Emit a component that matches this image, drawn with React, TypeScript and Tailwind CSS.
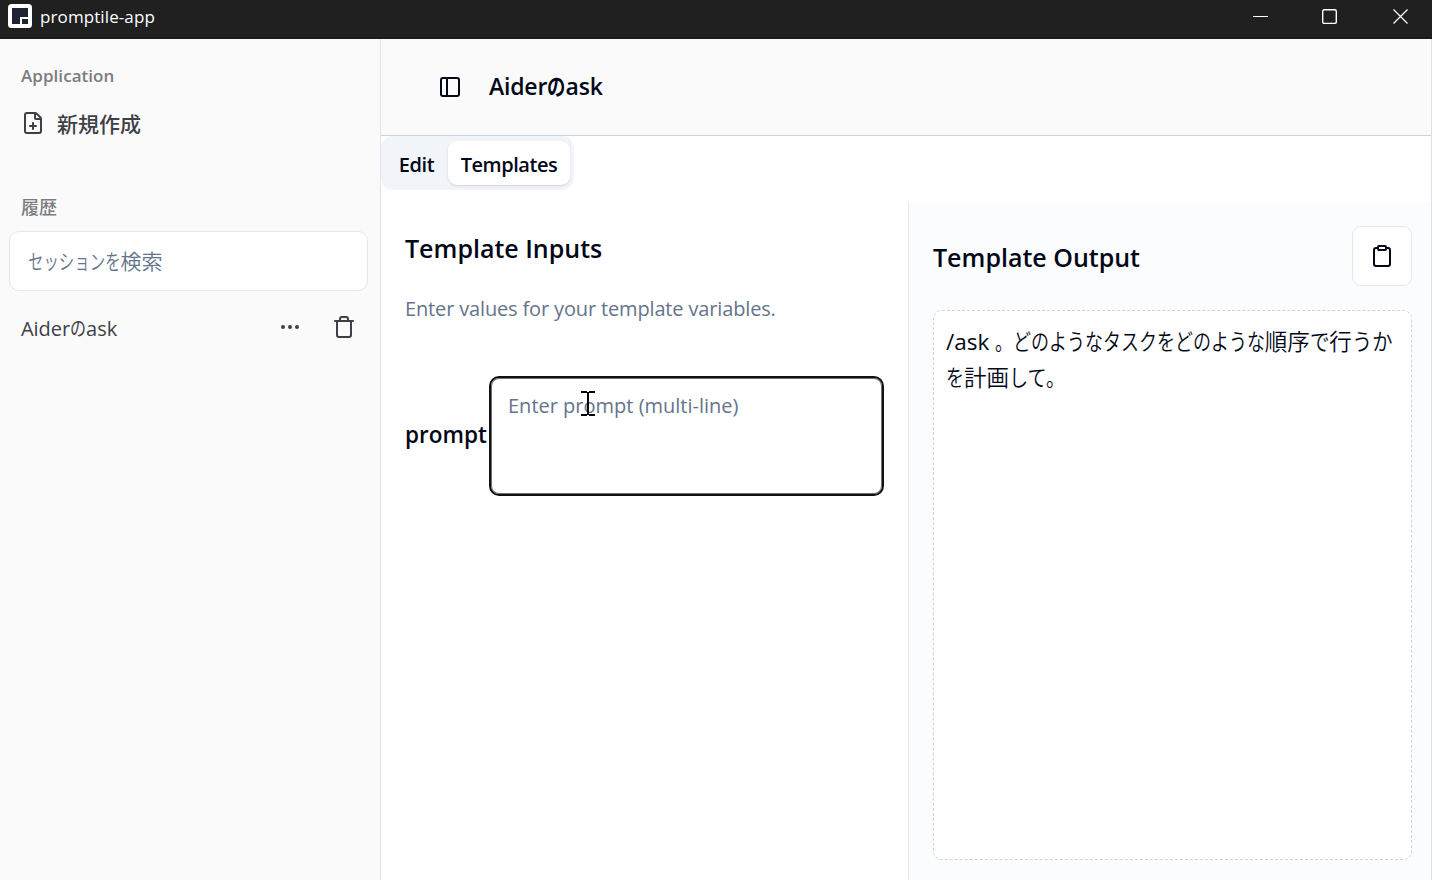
import React from "react";
import { FilePlus, PanelLeft, Ellipsis, Trash, Clipboard } from "lucide-react";

// Condensed kana, set to a given advance per character (in em).
function Kana({ children, ratio = 0.8 }: { children: string; ratio?: number }) {
  return (
    <span className="inline-block whitespace-nowrap" style={{ width: `${children.length * ratio}em` }}>
      <span className="inline-block origin-left" style={{ transform: `scaleX(${ratio})` }}>
        {children}
      </span>
    </span>
  );
}

function TitleBar() {
  return (
    <header className="flex h-[39px] shrink-0 items-start border-b-2 border-[#1b191a] bg-[#202020] text-white">
      <div className="flex items-start gap-2 pt-1 pl-2">
        <svg width="24" height="24" viewBox="0 0 24 24">
          <rect width="24" height="24" rx="3.5" fill="#fff" />
          <path d="M4 4h16v13h-8v3H4z" fill="#1f2433" />
          <path d="M12 13h8v7h-8z" fill="#fff" />
          <path d="M14 15h6v5h-6z" fill="#1f2433" />
        </svg>
        <span className="pt-px text-[17px] leading-6 tracking-[0.1px]">promptile-app</span>
      </div>
      <div className="ml-auto flex gap-[54px] pt-[9px] pr-[23px]">
        <svg width="16" height="16" viewBox="0 0 16 16" fill="none" stroke="#fff" className="mr-[-1px]">
          <path d="M0 7.500h15" />
        </svg>
        <svg width="16" height="16" viewBox="0 0 16 16" fill="none" stroke="#fff" strokeWidth="1.4" className="mr-px">
          <rect x="0.700" y="0.8" width="13.600" height="13.600" rx="1.5" />
        </svg>
        <svg width="16" height="16" viewBox="0 0 16 16" fill="none" stroke="#fff" strokeWidth="1.2">
          <path d="M0.500 0.500l14 14M14.500 0.500l-14 14" />
        </svg>
      </div>
    </header>
  );
}

function Sidebar() {
  return (
    <aside className="flex w-[381px] shrink-0 flex-col border-r border-[#dfe6ef] bg-[#fafafa] text-[#3f3f46]">
      <div className="flex h-12 items-center pt-[25px] pl-[21px] text-[17px] font-semibold text-[#7c7c80]">
        <span className="tracking-[0.05px]">Application</span>
      </div>
      <div className="mt-[13px] flex h-12 items-center gap-3 pl-[21px]">
        <FilePlus size={24} strokeWidth={2} className="mt-[-2px]" />
        <span className="text-[21px] leading-8 font-medium">新規作成</span>
      </div>
      <div className="mt-[35px] flex h-12 items-center pl-[21px] text-[18px] font-medium text-[#7c7c80]">履歴</div>
      <div className="mr-3 ml-[9px] flex h-[60px] items-center rounded-[10px] border border-[#e2e8f0] bg-white px-[18px] text-[21px] leading-8 font-[350] text-[#64748b]">
        <span>
          <Kana ratio={0.735}>セッションを</Kana>検索
        </span>
      </div>
      <div className="mt-3 flex h-12 items-center pr-6 pl-[21px]">
        <span className="pt-[3px] text-[20px] leading-8 tracking-[-0.05px]">
          Aider<Kana>の</Kana>ask
        </span>
        <Ellipsis size={24} className="ml-auto" />
        <Trash size={24} className="ml-[30px]" />
      </div>
    </aside>
  );
}

function Tabs() {
  return (
    <div className="flex h-[54px] self-start rounded-xl bg-[#f1f5f9] py-[5px] pr-1 pl-[5px] text-[20px] leading-[30px] font-semibold tracking-[-0.45px]">
      <button className="w-[62px] pt-1 pr-px">Edit</button>
      <button className="w-[122px] rounded-[9px] bg-white pt-1 shadow-sm">Templates</button>
    </div>
  );
}

function Inputs() {
  return (
    <section className="flex w-[527px] shrink-0 flex-col pr-6 pl-6">
      <h2 className="mt-7 text-[25px] leading-9 font-semibold">Template Inputs</h2>
      <p className="mt-[25px] text-[20px] leading-9 tracking-[-0.15px] text-[#64748b]">
        Enter values for your template variables.
      </p>
      <div className="mt-[49px] flex items-center">
        <label className="w-[84px] shrink-0 pb-0.5 text-[22.5px] font-semibold whitespace-nowrap">prompt</label>
        <div className="relative h-[120px] flex-1 rounded-[10px] border-2 border-[#101113] px-[17px] py-[13px] text-[20px] leading-[30px] text-[#64748b] shadow-[inset_0_0_0_1px_#6f7073]">
          Enter prompt (multi-line)
          <svg
            className="absolute top-3 left-[90px]"
            width="14"
            height="26"
            viewBox="0 0 14 26"
            fill="none"
            stroke="#000"
            strokeWidth="2"
          >
            <path d="M0 2h6M8 2h6M0 25h6M8 25h6" strokeWidth="2" />
            <path d="M7 2v23" />
          </svg>
        </div>
      </div>
    </section>
  );
}

function Output() {
  return (
    <section className="flex min-w-0 flex-1 flex-col border-l border-[#e2e8f0] bg-[#fbfcfe] pt-6 pr-[19px] pb-5 pl-6">
      <div className="flex items-center justify-between">
        <h2 className="pt-0.5 text-[25px] leading-9 font-semibold">Template Output</h2>
        <button className="flex size-[60px] items-center justify-center rounded-[9px] border border-[#e2e8f0] bg-white">
          <Clipboard size={24} />
        </button>
      </div>
      <div className="mt-6 flex-1 rounded-[9px] border border-dashed border-[#cfd4da] bg-white px-3 py-[13px] text-[22.5px] leading-9">
        <p className="h-9 whitespace-nowrap">
          /ask{" "}
          <span className="font-[350]">
            <Kana ratio={0.78}>。</Kana>
            <Kana>どのようなタスクをどのような</Kana>順序<Kana ratio={0.87}>で</Kana>行<Kana ratio={0.9}>うか</Kana>
          </span>
        </p>
        <p className="h-9 font-[350] whitespace-nowrap">
          <Kana>を</Kana>計画<Kana ratio={0.85}>して。</Kana>
        </p>
      </div>
    </section>
  );
}

export default function App() {
  return (
    <div className="flex h-[880px] w-[1432px] flex-col overflow-hidden bg-white font-['Open_Sans','Noto_Sans_CJK_JP',sans-serif] text-[#020817]">
      <TitleBar />
      <div className="flex min-h-0 flex-1 border-r border-[#dde1e6]">
        <Sidebar />
        <main className="flex min-w-0 flex-1 flex-col">
          <header className="flex h-[97px] shrink-0 items-center gap-[27px] border-b border-[#cbd5e1] bg-[#fafafa] pl-[57px]">
            <PanelLeft size={24} />
            <h1 className="pb-[3px] text-[23px] leading-9 font-semibold tracking-[-0.2px]">
              Aider<Kana>の</Kana>ask
            </h1>
          </header>
          <Tabs />
          <div className="mt-3 flex min-h-0 flex-1">
            <Inputs />
            <Output />
          </div>
        </main>
      </div>
    </div>
  );
}
